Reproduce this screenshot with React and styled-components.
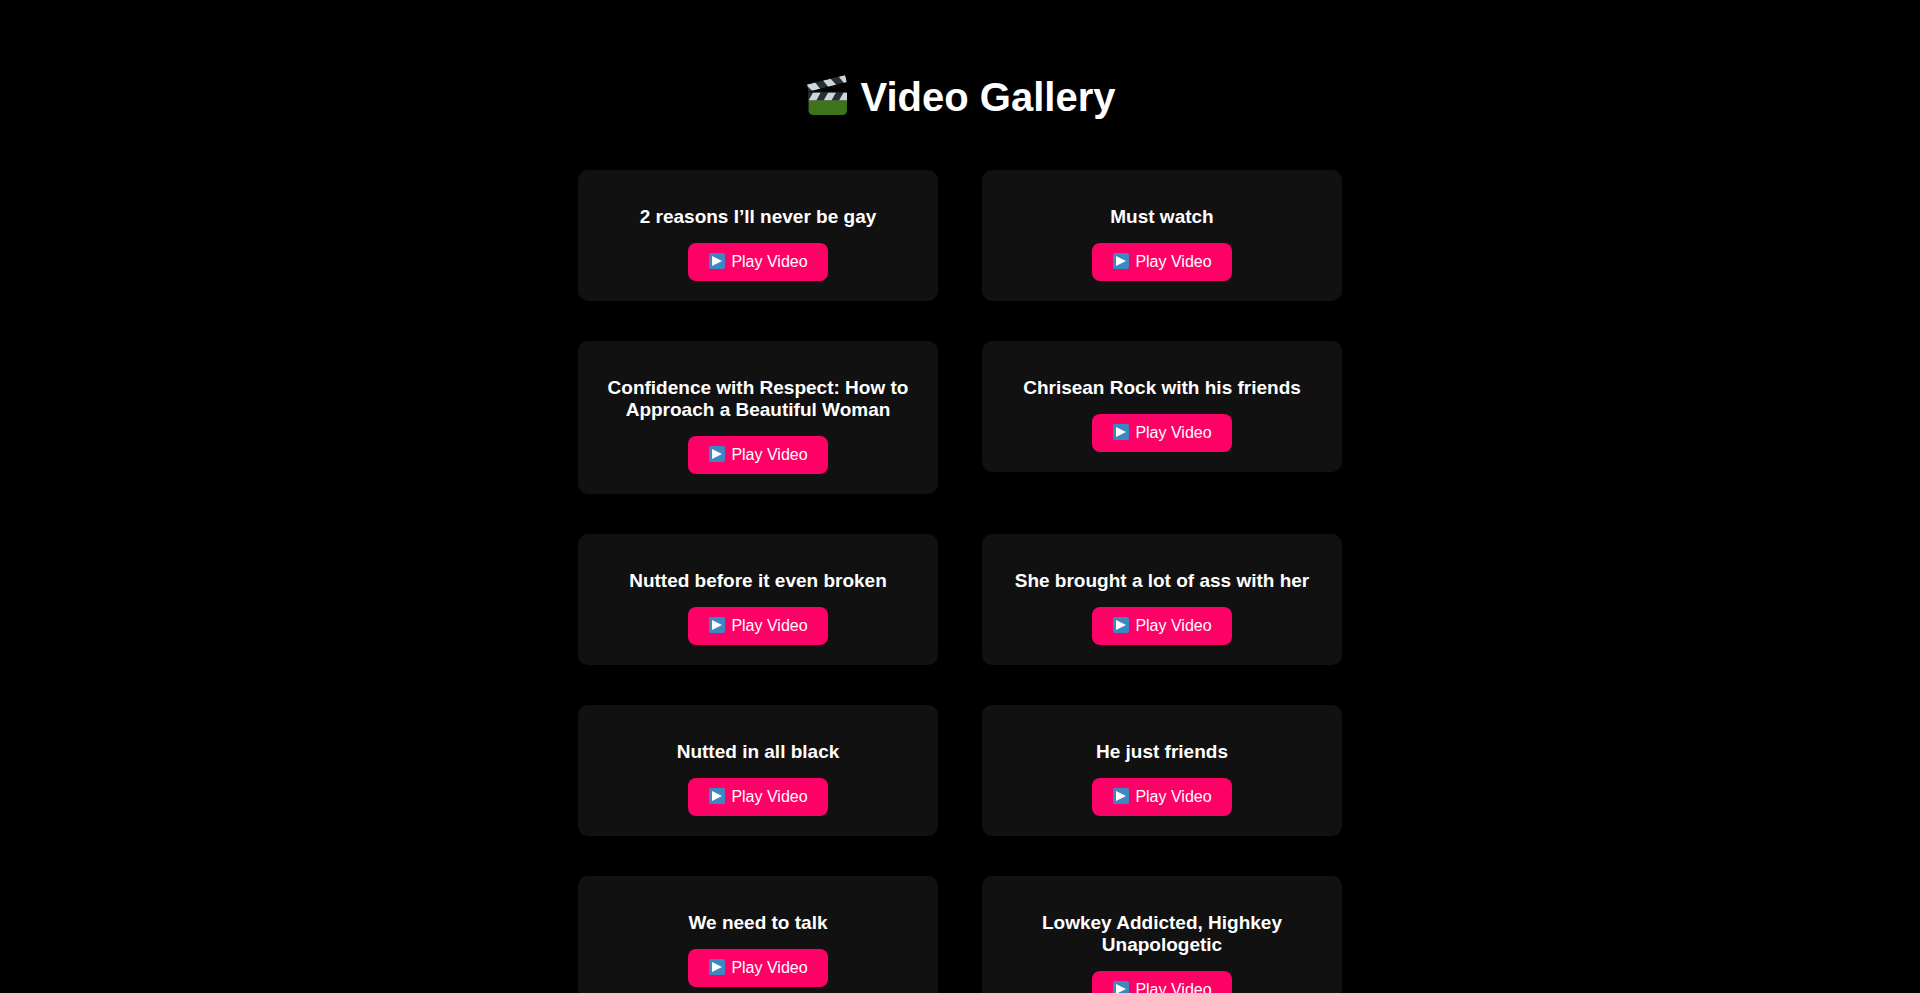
import React from "react";
import styled, { createGlobalStyle } from "styled-components";

const GlobalStyle = createGlobalStyle`
  * {
    box-sizing: border-box;
  }

  body {
    margin: 0;
    background: #000;
    color: #fff;
    font-family: "Liberation Sans", Arial, sans-serif;
  }
`;

const Page = styled.main`
  display: flex;
  flex-direction: column;
  align-items: center;
  min-height: 100vh;
  padding: 74px 20px 40px;
`;

const Heading = styled.h1`
  display: flex;
  align-items: center;
  gap: 14px;
  margin: 0 0 50px;
  font-size: 40px;
  line-height: 46px;
`;

const ClapperIcon = styled.svg`
  width: 42px;
  height: 40px;
  margin-bottom: 4px;
`;

const Gallery = styled.section`
  display: grid;
  grid-template-columns: repeat(auto-fit, 360px);
  justify-content: center;
  align-items: start;
  gap: 40px 44px;
  width: 100%;
  max-width: 764px;
`;

const Card = styled.article`
  display: flex;
  flex-direction: column;
  align-items: center;
  gap: 15px;
  padding: 36px 20px 20px;
  border-radius: 10px;
  background: #111;
  text-align: center;
`;

const CardTitle = styled.h2`
  margin: 0;
  font-size: 19px;
  line-height: 22px;
`;

const PlayButton = styled.button`
  display: flex;
  align-items: center;
  gap: 5px;
  padding: 10px 20px;
  border: 0;
  border-radius: 8px;
  background: #ff0066;
  color: #fff;
  font-family: inherit;
  font-size: 16px;
  line-height: 18px;
  cursor: pointer;
`;

const PlayIcon = styled.svg`
  width: 18px;
  height: 18px;
`;

const videos = [
  "2 reasons I’ll never be gay",
  "Must watch",
  "Confidence with Respect: How to Approach a Beautiful Woman",
  "Chrisean Rock with his friends",
  "Nutted before it even broken",
  "She brought a lot of ass with her",
  "Nutted in all black",
  "He just friends",
  "We need to talk",
  "Lowkey Addicted, Highkey Unapologetic",
];

function Clapper() {
  return (
    <ClapperIcon
      viewBox="0 0 36 36"
      preserveAspectRatio="xMaxYMid meet"
      aria-hidden="true"
    >
      <defs>
        <clipPath id="clapper-bar">
          <path d="M1 15.5H36V23H1Z" />
        </clipPath>
        <clipPath id="clapper-arm">
          <path d="M0 8.6 33.8 0.2Q34.4 0.1 34.5 0.6L35.8 6.4 1.8 14.9Z" />
        </clipPath>
      </defs>
      <path fill="#3e721d" d="M1.4 21H36V32a4 4 0 0 1-4 4H5.4a4 4 0 0 1-4-4Z" />
      <g clipPath="url(#clapper-arm)">
        <path fill="#292f33" d="M0 0H36V16H0Z" />
        <path
          fill="#ccd6dd"
          d="M-1 8.9 7.4 6.8 12 12.7 5 14.5ZM14.4 5 21.3 3.3 26.4 9.1 19.3 10.9ZM28.6 1.5 34.5 0 36 6.8 33.4 7.5Z"
        />
      </g>
      <g clipPath="url(#clapper-bar)">
        <path fill="#292f33" d="M1 15.5H36V23H1Z" />
        <path
          fill="#ccd6dd"
          d="M5.6 15.5H12.4L8.4 23H1.4ZM19.2 15.5H26.2L22 23H15ZM33 15.5H36V23H28.8Z"
        />
      </g>
      <path fill="#292f33" d="M0.3 9.5 2.8 15H36V15.7H1.4Q0.5 13 0.3 9.5Z" />
    </ClapperIcon>
  );
}

function Play() {
  return (
    <PlayIcon viewBox="0 0 18 18" aria-hidden="true">
      <rect x="1" y="0" width="16" height="16" rx="2" fill="#3b88c3" />
      <path fill="#fff" d="M4 3 14 8 4 13Z" />
    </PlayIcon>
  );
}

function VideoCard({ title }) {
  return (
    <Card>
      <CardTitle>{title}</CardTitle>
      <PlayButton type="button">
        <Play />
        Play Video
      </PlayButton>
    </Card>
  );
}

export default function App() {
  return (
    <>
      <GlobalStyle />
      <Page>
        <Heading>
          <Clapper />
          Video Gallery
        </Heading>
        <Gallery>
          {videos.map((title) => (
            <VideoCard key={title} title={title} />
          ))}
        </Gallery>
      </Page>
    </>
  );
}
